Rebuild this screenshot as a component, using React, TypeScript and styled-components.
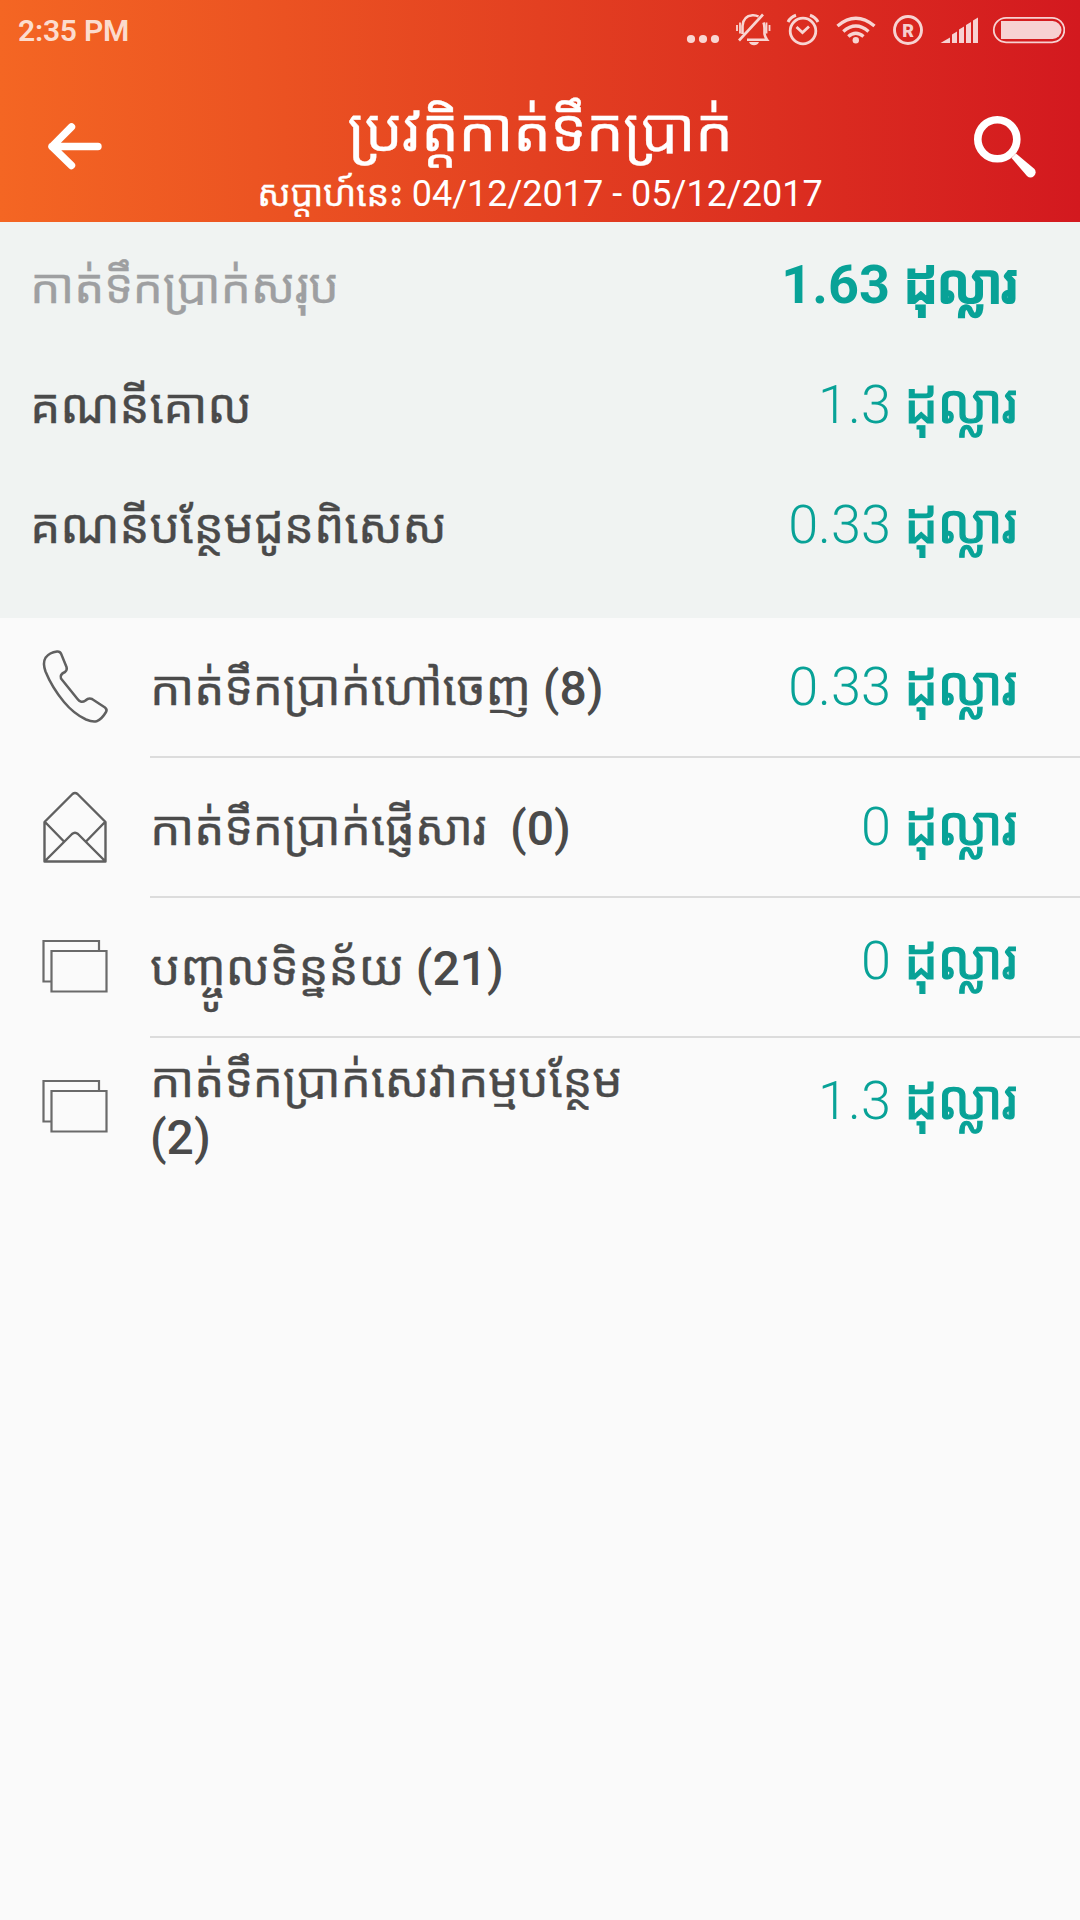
import React from "react";
import styled, { createGlobalStyle } from "styled-components";

const GlobalStyle = createGlobalStyle`
  * { box-sizing: border-box; }
  body {
    margin: 0;
    background: #fafafa;
    font-family: Roboto, "Noto Sans Khmer", "Noto Sans", sans-serif;
  }
`;

const Screen = styled.div`
  width: 1080px;
  height: 1920px;
  overflow: hidden;
  background: #fafafa;
`;

const Header = styled.header`
  display: flex;
  flex-direction: column;
  height: 222px;
  color: #fff;
  background: linear-gradient(90deg, #f46623 0%, #e34021 50%, #d3191f 100%);
`;

const StatusBar = styled.div`
  display: flex;
  align-items: center;
  justify-content: space-between;
  height: 60px;
  padding: 0 15px 0 18px;
  color: rgba(255, 255, 255, 0.8);
`;

const Clock = styled.span`
  padding-top: 2px;
  font-size: 30px;
  font-weight: 600;
  line-height: 58px;
  letter-spacing: -0.2px;
`;

const StatusIcons = styled.svg`
  display: block;
  width: 380px;
  height: 60px;
`;

const TitleBar = styled.div`
  display: grid;
  grid-template-columns: 150px 1fr 150px;
  height: 162px;
`;

const IconButton = styled.button`
  display: flex;
  align-items: center;
  justify-content: center;
  height: 174px;
  padding: 0;
  border: 0;
  background: none;
  color: inherit;
`;

const Titles = styled.div`
  display: flex;
  flex-direction: column;
  align-items: center;
  padding-top: 30px;
  white-space: nowrap;
`;

const Khmer = styled.span<{ $tight?: boolean }>`
  font-weight: 400;
  letter-spacing: ${(p) => (p.$tight ? -0.012 : -0.007)}em;
  -webkit-text-stroke: 0.35px currentColor;
`;

const Title = styled.h1`
  margin: 0;
  font-size: 60px;
  font-weight: 400;
  line-height: 81px;
`;

const Subtitle = styled.p`
  margin: 0;
  font-size: 36px;
  font-weight: 400;
  line-height: 46px;
`;

const Summary = styled.section`
  height: 396px;
  padding: 3px 64px 0 30px;
  background: #f0f3f2;
`;

const SummaryRow = styled.div`
  display: flex;
  align-items: baseline;
  justify-content: space-between;
  height: 120px;
`;

const Label = styled.span<{ $muted?: boolean }>`
  font-size: 48px;
  font-weight: 500;
  line-height: 57px;
  color: ${(p) => (p.$muted ? "#9e9fa1" : "#4a4a4a")};
`;

const Amount = styled.span<{ $bold?: boolean; $raise?: number }>`
  flex: none;
  padding-bottom: ${(p) => p.$raise ?? 0}px;
  font-size: 54px;
  font-weight: ${(p) => (p.$bold ? 700 : 300)};
  line-height: 120px;
  white-space: nowrap;
  color: #08a297;
`;

const Unit = styled.span<{ $bold?: boolean }>`
  font-weight: ${(p) => (p.$bold ? 500 : 400)};
  letter-spacing: ${(p) => (p.$bold ? -1.8 : -1.2)}px;
  -webkit-text-stroke: ${(p) => (p.$bold ? 2 : 1.1)}px currentColor;
`;

const List = styled.ul`
  margin: 0;
  padding: 0;
  list-style: none;
`;

const Item = styled.li`
  display: grid;
  grid-template-columns: 150px 1fr;
  height: 140px;
`;

const ItemIcon = styled.div`
  display: flex;
  align-items: center;
  justify-content: center;
`;

const ItemBody = styled.div<{ $last: boolean }>`
  display: flex;
  align-items: center;
  justify-content: space-between;
  height: 140px;
  padding-right: 64px;
  border-bottom: 2px solid ${(p) => (p.$last ? "transparent" : "#dcdcdc")};
`;

const ItemLabel = styled(Label)`
  width: 490px;
  padding-top: 3px;
`;

const BackIcon = () => (
  <svg width="60" height="60" viewBox="45 117 60 60" fill="none" stroke="currentColor" strokeWidth="7.4" strokeLinecap="round" strokeLinejoin="round">
    <path d="M98 146.500H52M71.500 126.800L52 146.500L71.500 165.500" />
  </svg>
);

const SearchIcon = () => (
  <svg width="70" height="70" viewBox="970 112 70 70">
    <circle cx="997.300" cy="139.300" r="19.500" fill="none" stroke="currentColor" strokeWidth="7.600" />
    <path d="M1011.500 158L1016 153.500L1034.500 169Q1037 172.500 1034 176Q1030.500 179 1027 176Z" fill="currentColor" />
  </svg>
);

const PhoneIcon = () => (
  <svg width="90" height="96" viewBox="0 0 90 96" fill="none" stroke="#606060" strokeWidth="2.5" strokeLinejoin="round">
    <path d="M27 11.500Q30 11.200 31.200 14L36.500 27Q37.500 30 35 32Q29.500 34.500 31 38.500L47.500 59Q51 63.800 55.500 60.500Q58.500 57.500 62 59L75 67.500Q77.500 69.500 76 72Q72 79 66.500 81.300Q62.500 82.300 56 79.500Q44 74 34 62Q22 47.500 15.500 31.500Q12.500 22.500 15.500 17.800Q19.500 12.300 27 11.500Z" />
  </svg>
);

const EnvelopeIcon = () => (
  <svg width="90" height="96" viewBox="0 0 90 96" fill="none" stroke="#606060" strokeWidth="2.4" strokeLinejoin="round">
    <path d="M14.500 81.500V42L42.500 14Q45 11.800 47.500 14L75.500 42V81.500ZM15 42L33.500 61M75 42L56.500 61M15 81L42 54Q45 51.500 48 54L75 81" />
  </svg>
);

const PagesIcon = () => (
  <svg width="90" height="96" viewBox="0 0 90 96" fill="none" stroke="#6a6a6a" strokeWidth="2.2">
    <path d="M21 61.500H13.500V21H69V30" />
    <path d="M21.500 31H76.500V71.500H21.500Z" />
  </svg>
);

const StatusGlyphs = () => (
  <StatusIcons viewBox="685 0 380 60" fill="currentColor">
    <circle cx="691" cy="39" r="4.100" />
    <circle cx="703" cy="39" r="4.100" />
    <circle cx="715" cy="39" r="4.100" />
    <g fill="none" stroke="currentColor" strokeWidth="2.600">
      <path d="M742.500 34V26Q743 16 752.500 15.200Q756 15 758.500 16.500M763.500 22.500Q764.500 25 764.500 28V34Q765 37 767 39.700H747" />
      <path d="M739 40.500L763 14.500" />
      <path d="M737 25V31M740 22.500V33.500M766.500 22.500V33.500M769.500 25V31" strokeWidth="1.800" />
    </g>
    <path d="M749 42H759Q757.500 45.300 754 45.300Q750.500 45.300 749 42Z" />
    <g fill="none" stroke="currentColor" strokeWidth="2.800">
      <circle cx="803" cy="31" r="12.800" />
      <path d="M796.500 27L802.500 32.500L809 26.500" />
      <path d="M788 22Q790.500 17 796 15.200M818 22Q815.500 17 810 15.200" strokeWidth="3" />
    </g>
    <g fill="none" stroke="currentColor" strokeWidth="3.400">
      <path d="M837.500 26Q855.800 10.500 874.500 26" />
      <path d="M843.300 31.500Q855.800 20.500 868.500 31.500" />
      <path d="M848.300 36.500Q855.800 30 863.500 36.500" />
    </g>
    <circle cx="855.800" cy="40.300" r="3.200" />
    <circle cx="908" cy="30" r="13.500" fill="none" stroke="currentColor" strokeWidth="2.900" />
    <text x="908" y="36.500" fontSize="18" fontWeight="900" textAnchor="middle">R</text>
    <path d="M940.500 43L950 37.500V43ZM952 43V34.500L957 31.500V43ZM959 43V29.500L964 26.500V43ZM966 43V25L971 22V43ZM973 43V20.500L978 17.500V43Z" />
    <rect x="993.800" y="17.800" width="70.500" height="24.500" rx="12.250" fill="none" stroke="currentColor" strokeWidth="1.800" />
    <path d="M1001 21H1052.500A9 9 0 0 1 1052.500 39H1001Z" />
  </StatusIcons>
);

const summary = [
  { label: "កាត់ទឹកប្រាក់សរុប", value: "1.63", total: true },
  { label: "គណនីគោល", value: "1.3", total: false },
  { label: "គណនីបន្ថែមជូនពិសេស", value: "0.33", total: false },
];

const items = [
  { Icon: PhoneIcon, label: "កាត់ទឹកប្រាក់ហៅចេញ", count: " (8)", value: "0.33", raise: 0 },
  { Icon: EnvelopeIcon, label: "កាត់ទឹកប្រាក់ផ្ញើសារ", count: "\u00a0 (0)", value: "0", raise: 0 },
  { Icon: PagesIcon, label: "បញ្ចូលទិន្នន័យ", count: " (21)", value: "0", raise: 13 },
  { Icon: PagesIcon, label: "កាត់ទឹកប្រាក់សេវាកម្មបន្ថែម", count: " (2)", value: "1.3", raise: 13 },
];

export default function App() {
  return (
    <Screen>
      <GlobalStyle />
      <Header>
        <StatusBar>
          <Clock>2:35 PM</Clock>
          <StatusGlyphs />
        </StatusBar>
        <TitleBar>
          <IconButton aria-label="Back">
            <BackIcon />
          </IconButton>
          <Titles>
            <Title>
              <Khmer $tight>ប្រវត្តិកាត់ទឹកប្រាក់</Khmer>
            </Title>
            <Subtitle>
              <Khmer $tight>សប្តាហ៍នេះ</Khmer> 04/12/2017 - 05/12/2017
            </Subtitle>
          </Titles>
          <IconButton aria-label="Search">
            <SearchIcon />
          </IconButton>
        </TitleBar>
      </Header>
      <Summary>
        {summary.map(({ label, value, total }) => (
          <SummaryRow key={label}>
            <Label $muted={total}>
              <Khmer>{label}</Khmer>
            </Label>
            <Amount $bold={total}>
              {value} <Unit $bold={total}>ដុល្លារ</Unit>
            </Amount>
          </SummaryRow>
        ))}
      </Summary>
      <List>
        {items.map(({ Icon, label, count, value, raise }, i) => (
          <Item key={label}>
            <ItemIcon>
              <Icon />
            </ItemIcon>
            <ItemBody $last={i === items.length - 1}>
              <ItemLabel>
                <Khmer>{label}</Khmer>
                {count}
              </ItemLabel>
              <Amount $raise={raise}>
                {value} <Unit>ដុល្លារ</Unit>
              </Amount>
            </ItemBody>
          </Item>
        ))}
      </List>
    </Screen>
  );
}
